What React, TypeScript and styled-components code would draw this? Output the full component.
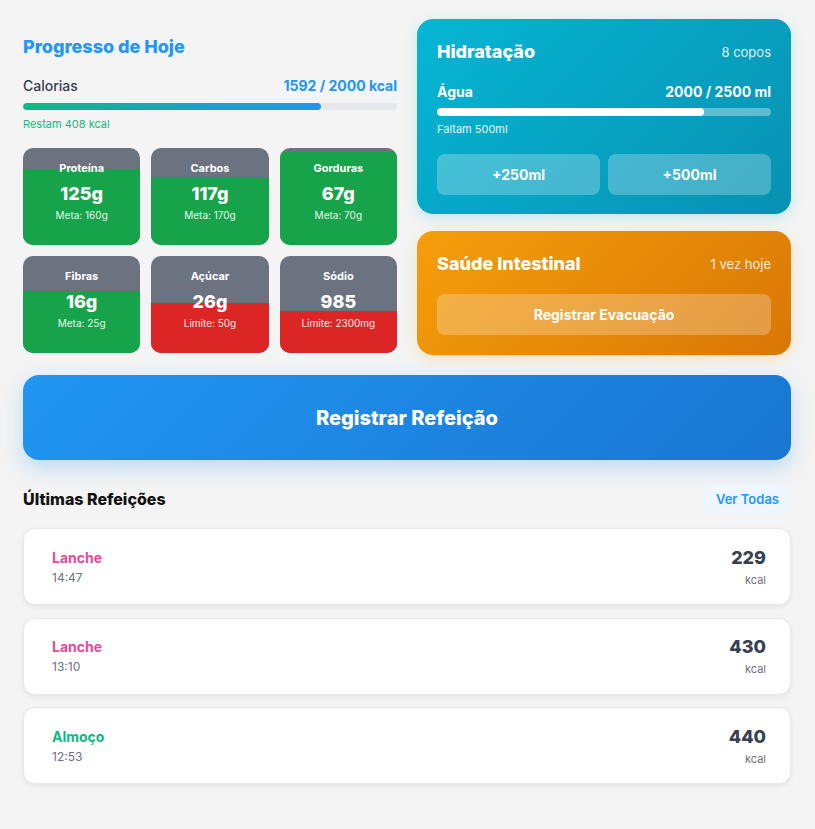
import React from "react";
import styled, { createGlobalStyle } from "styled-components";

const GlobalStyle = createGlobalStyle`
  * { box-sizing: border-box; }
  html, body { margin: 0; padding: 0; background: #f4f4f4; }
  body { font-family: Inter, "Open Sans", "Noto Sans", sans-serif; color: #111827; }
`;

const Page = styled.div`
  padding: 19px 24px 40px 23px;
`;

const TopGrid = styled.div`
  display: grid;
  grid-template-columns: 1fr 1fr;
  gap: 20px;
`;

const LeftCol = styled.section`
  padding-top: 16px;
`;

const SectionTitle = styled.h2`
  margin: 0;
  font-size: 18px;
  line-height: 23px;
  font-weight: 800;
  color: #2196f3;
`;

const CalRow = styled.div`
  display: flex;
  justify-content: space-between;
  align-items: center;
  margin-top: 18px;
  font-size: 14px;
  line-height: 20px;
`;

const CalLabel = styled.span`
  color: #374151;
  font-weight: 500;
`;

const CalValue = styled.span`
  color: #2196f3;
  font-weight: 700;
`;

const Track = styled.div<{ $light?: boolean }>`
  height: 7px;
  border-radius: 4px;
  overflow: hidden;
  background: ${(p) => (p.$light ? "rgba(255,255,255,0.35)" : "#e5e7eb")};
`;

const CalTrack = styled(Track)`
  margin-top: 7px;
`;

const Fill = styled.div<{ $variant: "cal" | "water" }>`
  height: 100%;
  border-radius: 4px;
  background: ${(p) =>
    p.$variant === "cal" ? "linear-gradient(90deg, #10b981, #2196f3)" : "#ffffff"};
`;

const Remaining = styled.div`
  margin-top: 6px;
  font-size: 11px;
  line-height: 16px;
  color: #10b981;
`;

const MacroGrid = styled.div`
  display: grid;
  grid-template-columns: repeat(3, 1fr);
  gap: 11px;
  margin-top: 16px;
`;

const MacroCard = styled.div`
  position: relative;
  height: 97px;
  border-radius: 10px;
  overflow: hidden;
  background: #6b7280;
  color: #fff;
  text-align: center;
`;

const MacroFill = styled.div<{ $bad?: boolean }>`
  position: absolute;
  left: 0;
  right: 0;
  bottom: 0;
  background: ${(p) => (p.$bad ? "#dc2626" : "#16a34a")};
`;

const MacroBody = styled.div`
  position: relative;
  padding-top: 12px;
`;

const MacroLabel = styled.div`
  font-size: 11px;
  line-height: 16px;
  font-weight: 700;
`;

const MacroValue = styled.div`
  margin-top: 6px;
  font-size: 18px;
  line-height: 24px;
  font-weight: 800;
`;

const MacroSub = styled.div`
  margin-top: 2px;
  font-size: 10px;
  line-height: 14px;
  opacity: 0.9;
`;

const RightCol = styled.div`
  display: flex;
  flex-direction: column;
  gap: 17px;
`;

const ColorCard = styled.div<{ $tone: "water" | "gut" }>`
  border-radius: 16px;
  padding: 20px 20px ${(p) => (p.$tone === "water" ? "19px" : "20px")};
  color: #fff;
  background: ${(p) =>
    p.$tone === "water"
      ? "linear-gradient(135deg, #06b6d4, #0891b2)"
      : "linear-gradient(135deg, #f59e0b, #d97706)"};
  box-shadow: ${(p) =>
    p.$tone === "water"
      ? "0 4px 14px rgba(6,182,212,0.22)"
      : "0 4px 14px rgba(245,158,11,0.22)"};
`;

const CardHead = styled.div`
  display: flex;
  justify-content: space-between;
  align-items: center;
`;

const CardTitle = styled.h3`
  margin: 0;
  font-size: 18px;
  line-height: 26px;
  font-weight: 800;
`;

const CardMeta = styled.span`
  font-size: 13px;
  opacity: 0.85;
`;

const WaterRow = styled.div`
  display: flex;
  justify-content: space-between;
  align-items: center;
  margin-top: 17px;
  font-size: 14px;
  line-height: 20px;
  font-weight: 700;
`;

const WaterTrack = styled(Track)`
  margin-top: 6px;
  height: 8px;
`;

const WaterNote = styled.div`
  margin-top: 5px;
  font-size: 11px;
  line-height: 16px;
  opacity: 0.9;
`;

const ButtonRow = styled.div<{ $cols: number }>`
  display: grid;
  grid-template-columns: repeat(${(p) => p.$cols}, 1fr);
  gap: 8px;
  margin-top: 17px;
`;

const GlassButton = styled.button`
  height: 41px;
  border: none;
  border-radius: 8px;
  background: rgba(255, 255, 255, 0.25);
  color: #fff;
  font-family: inherit;
  font-size: 14px;
  font-weight: 700;
  cursor: pointer;
`;

const BigButton = styled.button`
  display: block;
  width: 100%;
  height: 85px;
  margin-top: 20px;
  border: none;
  border-radius: 16px;
  background: linear-gradient(135deg, #2196f3, #1976d2);
  box-shadow: 0 8px 22px rgba(33, 150, 243, 0.28);
  color: #fff;
  font-family: inherit;
  font-size: 20px;
  font-weight: 800;
  cursor: pointer;
`;

const ListHead = styled.div`
  display: flex;
  justify-content: space-between;
  align-items: center;
  margin-top: 25px;
`;

const ListTitle = styled.h3`
  margin: 0;
  font-size: 16px;
  font-weight: 800;
  color: #111;
`;

const LinkButton = styled.button`
  height: 28px;
  padding: 0 12px;
  border: none;
  border-radius: 8px;
  background: #eef6ff;
  color: #2196f3;
  font-family: inherit;
  font-size: 13px;
  font-weight: 600;
`;

const MealList = styled.div`
  display: flex;
  flex-direction: column;
  gap: 12.5px;
  margin-top: 15px;
`;

const MealCard = styled.div`
  display: flex;
  justify-content: space-between;
  align-items: center;
  height: 77px;
  padding: 0 24px 0 28px;
  background: #fff;
  border: 1px solid #e8e8ea;
  border-radius: 12px;
  box-shadow: 0 2px 5px rgba(0, 0, 0, 0.07);
`;

const MealName = styled.div<{ $color: string }>`
  font-size: 14px;
  line-height: 20px;
  font-weight: 700;
  color: ${(p) => p.$color};
`;

const MealTime = styled.div`
  margin-top: 2px;
  font-size: 12px;
  line-height: 16px;
  color: #6b7280;
`;

const MealRight = styled.div`
  text-align: right;
`;

const MealKcal = styled.div`
  font-size: 18px;
  line-height: 24px;
  font-weight: 800;
  color: #374151;
`;

const MealUnit = styled.div`
  margin-top: 2px;
  font-size: 11px;
  line-height: 16px;
  color: #6b7280;
`;

type Macro = { label: string; value: string; sub: string; pct: number; bad?: boolean };

const macros: Macro[] = [
  { label: "Proteína", value: "125g", sub: "Meta: 160g", pct: (125 / 160) * 100 },
  { label: "Carbos", value: "117g", sub: "Meta: 170g", pct: (117 / 170) * 100 },
  { label: "Gorduras", value: "67g", sub: "Meta: 70g", pct: (67 / 70) * 100 },
  { label: "Fibras", value: "16g", sub: "Meta: 25g", pct: (16 / 25) * 100 },
  { label: "Açúcar", value: "26g", sub: "Limite: 50g", pct: (26 / 50) * 100, bad: true },
  { label: "Sódio", value: "985", sub: "Limite: 2300mg", pct: (985 / 2300) * 100, bad: true },
];

const meals = [
  { name: "Lanche", time: "14:47", kcal: 229, color: "#ec4899" },
  { name: "Lanche", time: "13:10", kcal: 430, color: "#ec4899" },
  { name: "Almoço", time: "12:53", kcal: 440, color: "#10b981" },
];

export default function App() {
  return (
    <>
      <GlobalStyle />
      <Page>
        <TopGrid>
          <LeftCol>
            <SectionTitle>Progresso de Hoje</SectionTitle>
            <CalRow>
              <CalLabel>Calorias</CalLabel>
              <CalValue>1592 / 2000 kcal</CalValue>
            </CalRow>
            <CalTrack>
              <Fill $variant="cal" style={{ width: `${(1592 / 2000) * 100}%` }} />
            </CalTrack>
            <Remaining>Restam 408 kcal</Remaining>
            <MacroGrid>
              {macros.map((m) => (
                <MacroCard key={m.label}>
                  <MacroFill $bad={m.bad} style={{ height: `${m.pct}%` }} />
                  <MacroBody>
                    <MacroLabel>{m.label}</MacroLabel>
                    <MacroValue>{m.value}</MacroValue>
                    <MacroSub>{m.sub}</MacroSub>
                  </MacroBody>
                </MacroCard>
              ))}
            </MacroGrid>
          </LeftCol>
          <RightCol>
            <ColorCard $tone="water">
              <CardHead>
                <CardTitle>Hidratação</CardTitle>
                <CardMeta>8 copos</CardMeta>
              </CardHead>
              <WaterRow>
                <span>Água</span>
                <span>2000 / 2500 ml</span>
              </WaterRow>
              <WaterTrack $light>
                <Fill $variant="water" style={{ width: "80%" }} />
              </WaterTrack>
              <WaterNote>Faltam 500ml</WaterNote>
              <ButtonRow $cols={2}>
                <GlassButton>+250ml</GlassButton>
                <GlassButton>+500ml</GlassButton>
              </ButtonRow>
            </ColorCard>
            <ColorCard $tone="gut">
              <CardHead>
                <CardTitle>Saúde Intestinal</CardTitle>
                <CardMeta>1 vez hoje</CardMeta>
              </CardHead>
              <ButtonRow $cols={1}>
                <GlassButton>Registrar Evacuação</GlassButton>
              </ButtonRow>
            </ColorCard>
          </RightCol>
        </TopGrid>
        <BigButton>Registrar Refeição</BigButton>
        <ListHead>
          <ListTitle>Últimas Refeições</ListTitle>
          <LinkButton>Ver Todas</LinkButton>
        </ListHead>
        <MealList>
          {meals.map((m, i) => (
            <MealCard key={i}>
              <div>
                <MealName $color={m.color}>{m.name}</MealName>
                <MealTime>{m.time}</MealTime>
              </div>
              <MealRight>
                <MealKcal>{m.kcal}</MealKcal>
                <MealUnit>kcal</MealUnit>
              </MealRight>
            </MealCard>
          ))}
        </MealList>
      </Page>
    </>
  );
}
